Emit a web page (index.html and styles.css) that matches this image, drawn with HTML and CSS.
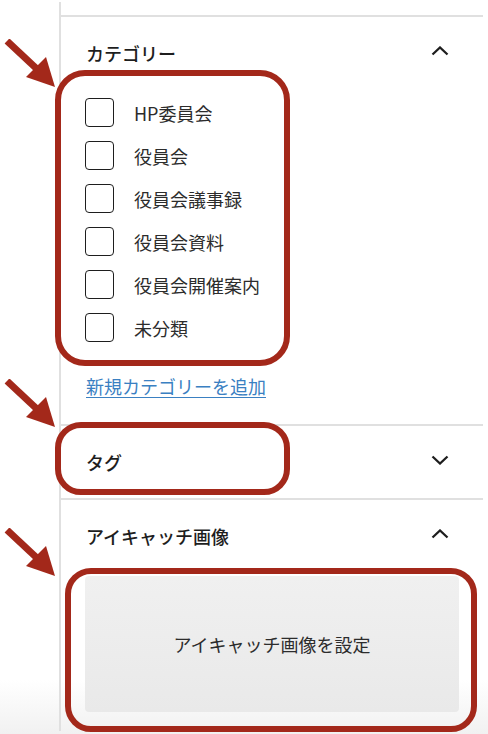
FILE: index.html
```html
<!DOCTYPE html>
<html lang="ja">
<head>
<meta charset="utf-8">
<title>投稿設定</title>
<link rel="stylesheet" href="styles.css">
</head>
<body>
<div class="page">
  <aside class="sidebar">
    <section class="panel">
      <div class="panel-header">
        <span class="panel-title">カテゴリー</span>
        <svg class="chev" width="18" height="10" viewBox="0 0 18 10"><polyline points="1.5,8.5 9,1.5 16.5,8.5" fill="none" stroke="#1e1e1e" stroke-width="2.3"/></svg>
      </div>
      <div class="panel-body">
        <ul class="cat-list">
          <li class="cat-item"><span class="checkbox"></span><span class="cat-label">HP委員会</span></li>
          <li class="cat-item"><span class="checkbox"></span><span class="cat-label">役員会</span></li>
          <li class="cat-item"><span class="checkbox"></span><span class="cat-label">役員会議事録</span></li>
          <li class="cat-item"><span class="checkbox"></span><span class="cat-label">役員会資料</span></li>
          <li class="cat-item"><span class="checkbox"></span><span class="cat-label">役員会開催案内</span></li>
          <li class="cat-item"><span class="checkbox"></span><span class="cat-label">未分類</span></li>
        </ul>
        <a class="add-link" href="#">新規カテゴリーを追加</a>
      </div>
    </section>
    <section class="panel">
      <div class="panel-header">
        <span class="panel-title">タグ</span>
        <svg class="chev" width="18" height="10" viewBox="0 0 18 10"><polyline points="1.5,1.5 9,8.5 16.5,1.5" fill="none" stroke="#1e1e1e" stroke-width="2.3"/></svg>
      </div>
    </section>
    <section class="panel">
      <div class="panel-header">
        <span class="panel-title">アイキャッチ画像</span>
        <svg class="chev" width="18" height="10" viewBox="0 0 18 10"><polyline points="1.5,8.5 9,1.5 16.5,8.5" fill="none" stroke="#1e1e1e" stroke-width="2.3"/></svg>
      </div>
      <div class="panel-body featured">
        <button class="featured-btn" type="button">アイキャッチ画像を設定</button>
      </div>
    </section>
  </aside>

  <div class="annot box-cat"></div>
  <div class="annot box-tag"></div>
  <div class="annot box-img"></div>

  <svg class="arrow arrow-1" width="60" height="52" viewBox="0 0 60 52"><line x1="7" y1="2" x2="38" y2="31" stroke="#a3281a" stroke-width="7"/><polygon points="55,48 26,38 46,18" fill="#a3281a"/></svg>
  <svg class="arrow arrow-2" width="60" height="52" viewBox="0 0 60 52"><line x1="7" y1="2" x2="38" y2="31" stroke="#a3281a" stroke-width="7"/><polygon points="55,48 26,38 46,18" fill="#a3281a"/></svg>
  <svg class="arrow arrow-3" width="60" height="52" viewBox="0 0 60 52"><line x1="7" y1="2" x2="38" y2="31" stroke="#a3281a" stroke-width="7"/><polygon points="55,48 26,38 46,18" fill="#a3281a"/></svg>
</div>
</body>
</html>
```

FILE: styles.css
```css
* { box-sizing: border-box; }
html, body { margin: 0; padding: 0; }
body {
  width: 488px;
  height: 734px;
  overflow: hidden;
  background: linear-gradient(to bottom, #ffffff 0, #ffffff 680px, #f1f1f1 734px);
  font-family: "Noto Sans CJK JP", "Noto Sans", sans-serif;
  color: #1e1e1e;
}
.page {
  position: relative;
  width: 488px;
  height: 734px;
}
.sidebar {
  margin-left: 59px;
  margin-top: 2px;
  width: 424px;
  height: 729px;
  border-left: 2px solid #e0e0e0;
  padding-top: 13px;
}
.panel {
  border-top: 2px solid #e0e0e0;
}
.panel-header {
  height: 72px;
  display: flex;
  align-items: center;
  justify-content: space-between;
  padding: 0 34px 0 25px;
}
.panel-title {
  font-size: 18px;
  font-weight: 500;
  line-height: 26px;
  color: #1e1e1e;
}
.chev { display: block; margin-top: -4px; }
.panel-body {
  padding: 2px 24px 25px 24px;
}
.cat-list {
  list-style: none;
  margin: 0;
  padding: 0;
}
.cat-item {
  height: 43px;
  display: flex;
  align-items: center;
  gap: 20px;
}
.checkbox {
  width: 29px;
  height: 29px;
  border: 1.5px solid #1e1e1e;
  border-radius: 4px;
  background: #fff;
  flex: none;
}
.cat-label {
  font-size: 18px;
  line-height: 26px;
  color: #2c2c2c;
}
.add-link {
  display: inline-block;
  margin-top: 24px;
  margin-left: 1px;
  font-size: 18px;
  line-height: 26px;
  color: #3a80c2;
  text-decoration: underline;
  text-underline-offset: 3px;
}
.featured {
  padding-top: 4px;
  padding-bottom: 0;
}
.featured-btn {
  width: 374px;
  height: 136px;
  border: none;
  border-radius: 4px;
  background: linear-gradient(to bottom, #f0f0f0, #e9e9e9);
  font-family: "Noto Sans CJK JP", "Noto Sans", sans-serif;
  font-size: 18px;
  color: #2c2c2c;
  padding: 0;
}
.annot {
  position: absolute;
  border: 6px solid #a3281a;
}
.box-cat { left: 55px; top: 68px; width: 235px; height: 296px; border-radius: 30px; }
.box-tag { left: 55px; top: 420px; width: 235px; height: 73px; border-radius: 26px; }
.box-img { left: 65px; top: 566px; width: 412px; height: 164px; border-radius: 26px; }
.arrow { position: absolute; left: 0; }
.arrow-1 { top: 37px; }
.arrow-2 { top: 377px; }
.arrow-3 { top: 526px; }
```
